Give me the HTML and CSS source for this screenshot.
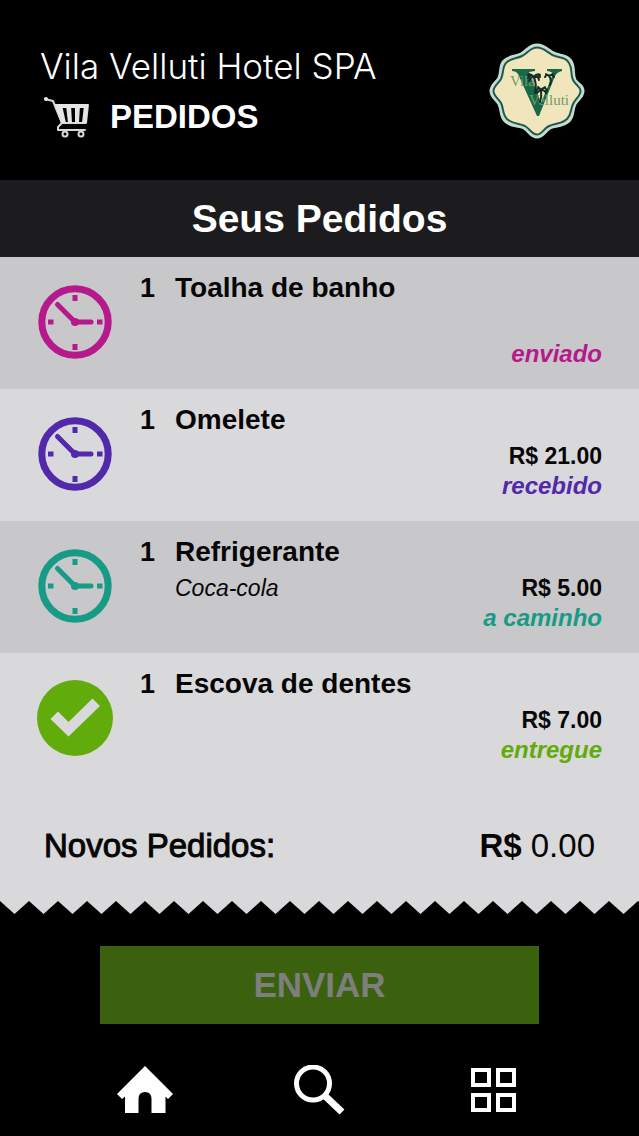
FILE: index.html
```html
<!DOCTYPE html>
<html lang="pt-BR">
<head>
    <meta charset="UTF-8">
    <meta name="viewport" content="width=device-width, initial-scale=1.0">
    <title>Seus Pedidos</title>
    <link rel="stylesheet" href="styles.css">
</head>
<body>
    <svg class="defs" width="0" height="0" aria-hidden="true">
        <symbol id="clock" viewBox="0 0 74 74">
            <circle cx="37" cy="37" r="33.2" fill="none" stroke="currentColor" stroke-width="7"/>
            <path d="M34.5 10h5v6h-5zM34.5 59h5v6h-5zM10 34.5h5.5v5H10zM59 34.5h5.5v5H59z" fill="currentColor"/>
            <path d="M19.5 19.500L37 37H53" fill="none" stroke="currentColor" stroke-width="5" stroke-linecap="round"/>
            <circle cx="37" cy="37" r="4" fill="currentColor"/>
        </symbol>
    </svg>

    <header class="header">
        <div class="header-text">
            <h1>Vila Velluti Hotel SPA</h1>
            <div class="section">
                <svg class="cart" width="52" height="42" viewBox="0 0 52 42" aria-hidden="true">
                    <g fill="none" stroke="#d8d8da" stroke-width="2" stroke-linejoin="round" stroke-linecap="round">
                        <path d="M5 3L13 5L22 27"/>
                        <path d="M15 9H48L46 27H22z"/>
                        <path d="M22 27L18 31V34H45"/>
                        <circle cx="25" cy="38" r="2.5"/>
                        <circle cx="41" cy="38" r="2.500"/>
                    </g>
                    <path d="M15 9h7l4 18h-4zM26 9h5l1 18h-4zM35 9h5l-1 18h-4zM44 9h4l-2 18h-4zM15 8h33v4H16z" fill="#e4e4e6"/>
                    <circle cx="6" cy="3" r="2" fill="#e4e4e6"/>
                </svg>
                <h2>PEDIDOS</h2>
            </div>
        </div>
        <svg class="logo" width="96" height="96" viewBox="0 0 96 96" role="img" aria-label="Vila Velluti">
            <path d="M48 2C57 2 60 9 67 11C74 13 79 13 82 18C86 24 83 31 86 37C89 42 94 42 94 48C94 54 89 56 86 61C83 67 85 73 80 78C74 84 67 82 61 85C56 88 54 94 48 94C42 94 40 88 35 85C29 82 22 84 16 78C11 73 13 67 10 61C7 56 2 54 2 48C2 42 7 40 10 35C13 29 10 23 15 18C20 13 26 14 32 11C38 8 40 2 48 2Z" fill="#f1e6bb" stroke="#c3ddd3" stroke-width="3"/>
            <path d="M48 4.5C56 4.5 59 11 66 13C73 15 77 15 80 20C84 26 81 31 84 37C87 43 91.5 43 91.5 48C91.5 53 87 55 84 61C81 67 83 71 78 76C73 81 67 80 60 83C54 86 53 91.5 48 91.5C43 91.5 41 86 36 83C29 80 23 81 18 76C13 71 15 66 12 60C9 55 4.5 53 4.5 48C4.5 43 9 41 12 36C15 30 13 24 17 20C21 15 27 16 33 13C39 10 41 4.5 48 4.5Z" fill="none" stroke="#1d5950" stroke-width="2"/>
            <path d="M23 26H46V28L40 29L52 60L64 31Q64 29 58 28V26H73V28Q68 29 66 33L50 73H48L29 31Q27 28 23 28Z" fill="#17694a"/>
            <text class="logo-text" x="21" y="43">Vila</text>
            <text class="logo-text" x="40" y="62">Velluti</text>
            <g fill="none" stroke="#142d22" stroke-width="2" stroke-linecap="round">
                <path d="M39 35q3-5 6-1q3-5 6 0M40 38q3-6 5-3q4-3 5 2M45 34q-4-4-6-2M45 34q4-4 6-2M45 34q3 8 1 16"/>
                <path d="M56 34q2-4 4-1q3-3 5 1M60 33l-3-2M60 33l4-2M60 33q3 4 1 9"/>
                <path d="M47 48q3-5 5-1q4-5 6 1M48 50q3-3 4-3q4 0 5 3M52 47l-3-3M52 47l4-3M52 47q1 6-1 12"/>
            </g>
        </svg>
    </header>

    <main>
        <h2 class="title">Seus Pedidos</h2>
        <ul class="orders">
            <li class="order enviado">
                <svg class="status-icon" aria-hidden="true"><use href="#clock"/></svg>
                <span class="qty">1</span>
                <div class="item">
                    <h3>Toalha de banho</h3>
                </div>
                <div class="values">
                    <em>enviado</em>
                </div>
            </li>
            <li class="order recebido">
                <svg class="status-icon" aria-hidden="true"><use href="#clock"/></svg>
                <span class="qty">1</span>
                <div class="item">
                    <h3>Omelete</h3>
                </div>
                <div class="values">
                    <strong>R$ 21.00</strong>
                    <em>recebido</em>
                </div>
            </li>
            <li class="order caminho">
                <svg class="status-icon" aria-hidden="true"><use href="#clock"/></svg>
                <span class="qty">1</span>
                <div class="item">
                    <h3>Refrigerante</h3>
                    <p>Coca-cola</p>
                </div>
                <div class="values">
                    <strong>R$ 5.00</strong>
                    <em>a caminho</em>
                </div>
            </li>
            <li class="order entregue">
                <svg class="status-icon" viewBox="0 0 74 74" aria-hidden="true">
                    <circle cx="37" cy="37" r="38" fill="currentColor"/>
                    <path d="M12.5 38L20 30.5L30.5 41L54.5 17.5L62 25L30.5 55.5Z" fill="#d9d8da"/>
                </svg>
                <span class="qty">1</span>
                <div class="item">
                    <h3>Escova de dentes</h3>
                </div>
                <div class="values">
                    <strong>R$ 7.00</strong>
                    <em>entregue</em>
                </div>
            </li>
        </ul>
        <div class="total">
            <span class="label">Novos Pedidos:</span>
            <span><b>R$</b> 0.00</span>
        </div>
        <!-- torn receipt edge -->
        <svg class="zigzag" width="100%" height="13" aria-hidden="true">
            <pattern id="teeth" width="29" height="13" patternUnits="userSpaceOnUse">
                <path d="M0 0H29L14.5 13Z" fill="#d9d8da"/>
            </pattern>
            <rect width="100%" height="13" fill="url(#teeth)"/>
        </svg>
        <div class="actions">
            <button class="send" type="button" disabled>ENVIAR</button>
        </div>
    </main>

    <nav class="nav">
        <a href="#" aria-label="Início">
            <svg width="58" height="50" viewBox="0 0 58 50">
                <path d="M29 1L57 29L52 34L49.5 31.5V48H35.5V34Q35.500 27 29 27Q22.5 27 22.5 34V48H9V31.5L6 34L1 29Z" fill="#fff"/>
            </svg>
        </a>
        <a href="#" aria-label="Buscar">
            <svg width="60" height="50" viewBox="0 0 60 50">
                <circle cx="20" cy="18.5" r="16.5" fill="none" stroke="#fff" stroke-width="5"/>
                <path d="M31 30L49 47" stroke="#fff" stroke-width="7"/>
            </svg>
        </a>
        <a href="#" aria-label="Menu">
            <svg width="46" height="50" viewBox="0 0 46 50">
                <path d="M2 5h16v15H2zM27 5h16v15H27zM2 30h16v15H2zM27 30h16v15H27z" fill="none" stroke="#fff" stroke-width="4"/>
            </svg>
        </a>
    </nav>
</body>
</html>
```

FILE: styles.css
```css
* {
    box-sizing: border-box;
}
body {
    margin: 0;
    min-height: 100vh;
    display: flex;
    flex-direction: column;
    font-family: "Liberation Sans", Arial, sans-serif;
    background-color: #000;
    color: #fff;
}
h1, h2, h3, p, ul {
    margin: 0;
    padding: 0;
}
.defs {
    position: absolute;
}
.header {
    display: flex;
    justify-content: space-between;
    align-items: flex-start;
    padding: 43px 54px 39px 40px;
}
.header h1 {
    font-family: Inter, "Liberation Sans", sans-serif;
    font-size: 35px;
    font-weight: 300;
    line-height: 46px;
}
.section {
    display: flex;
    align-items: center;
    gap: 18px;
    padding-top: 4px;
}
.section h2 {
    font-size: 33px;
    line-height: 48px;
}
.logo-text {
    font-family: "Liberation Serif", serif;
    font-size: 15px;
    fill: #6f9c70;
}
.title {
    background-color: #1c1b1d;
    text-align: center;
    font-size: 39px;
    line-height: 76px;
    padding-top: 1px;
}
.orders {
    list-style: none;
    color: #060606;
}
.order {
    display: flex;
    min-height: 132px;
    padding: 13px 37px 21px 38px;
    background-color: #d9d8da;
}
.order:nth-child(odd) {
    background-color: #c8c7c9;
}
.status-icon {
    width: 74px;
    height: 74px;
    margin: 15px 28px 0 0;
    overflow: visible;
}
.qty {
    width: 35px;
    font-size: 27px;
    font-weight: bold;
    line-height: 36px;
}
.item {
    flex: 1;
}
.item h3 {
    font-size: 28px;
    line-height: 36px;
}
.item p {
    font-size: 23px;
    font-style: italic;
    line-height: 36px;
}
.values {
    display: flex;
    flex-direction: column;
    justify-content: flex-end;
    text-align: right;
    line-height: 29px;
}
.values strong {
    font-size: 23px;
}
.values em {
    font-size: 24px;
    font-weight: bold;
}
.enviado .status-icon, .enviado em {
    color: #b5198b;
}
.recebido .status-icon, .recebido em {
    color: #5329ab;
}
.caminho .status-icon, .caminho em {
    color: #179a86;
}
.entregue .status-icon, .entregue em {
    color: #61ab0b;
}
.total {
    display: flex;
    justify-content: space-between;
    padding: 39px 44px 33px;
    background-color: #d9d8da;
    color: #060606;
    font-size: 33px;
    line-height: 44px;
}
.total .label {
    -webkit-text-stroke: 1px #060606;
}
.zigzag {
    display: block;
}
.actions {
    padding: 32px 100px 0;
}
.send {
    display: block;
    width: 100%;
    padding: 0;
    border: none;
    background-color: #3b610e;
    color: #7c7f7c;
    font-family: inherit;
    font-size: 35px;
    font-weight: bold;
    line-height: 78px;
}
.nav {
    display: flex;
    justify-content: space-between;
    padding: 41px 122px 20px 116px;
}
.nav a {
    display: block;
}
.nav svg {
    display: block;
}
```
